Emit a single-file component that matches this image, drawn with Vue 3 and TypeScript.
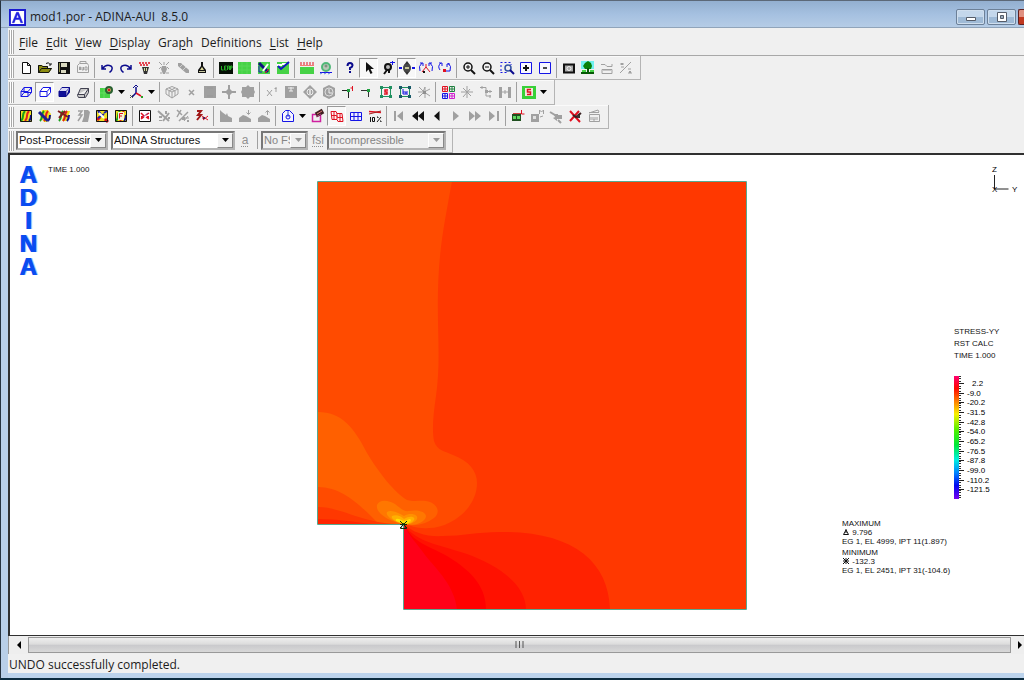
<script setup lang="ts">
import { ref } from 'vue'

interface Shape { d: string; fill: string; stroke: string; w: number }
interface Tool { icon: string; label: string; pressed?: boolean; off?: boolean; drop?: boolean }

const G = '#a0a0a0'
const N = '#0a0a8c'
const K = '#111111'
const R = '#e01020'
const B = '#1414e6'
const L = '#46d246'

const f = (d: string, fill: string): Shape => ({ d, fill, stroke: 'none', w: 0 })
const s = (d: string, stroke: string, w = 1, fill = 'none'): Shape => ({ d, fill, stroke, w })

const ring = (x: number, y: number, r: number) =>
  `M${x - r} ${y}a${r} ${r} 0 1 0 ${2 * r} 0a${r} ${r} 0 1 0 ${-2 * r} 0`

const cube = (c: string, front: string, hidden = false): Shape[] => [
  s('M3 7.5h7v5h-7zM3 7.5l3-4h7.5l-3.500 4M13.500 3.500v5l-3.500 4', c, 1, front),
  ...(hidden ? [s('M6 3.500v5l-3 4M6 8.500h7.500', c)] : [])
]
const band = (box: string): Shape[] => [
  f(box, '#f0e020'),
  s('M3 13Q5 11 5 8t2-5', '#18a018', 2),
  s('M7 13Q9 11 9 8t2-5', '#e02020', 2),
  s('M11 13q2-2 2-6', '#101090', 2)
]
const box = (c: string, inner: Shape[]): Shape[] => [s('M2.500 2.500h11v11h-11z', c, 1, '#fff'), ...inner]
const corners = (c: string): Shape[] => [
  s('M3.500 3.500h9v9h-9z', '#209060'),
  f('M2 2h3v3H2zM11 2h3v3h-3zM2 11h3v3H2zM11 11h3v3h-3z', c)
]
const lens = (c = K): Shape[] => [s(ring(7, 7, 4), c, 1.500), s('M10 10l4 4', c, 2)]

const icons: Record<string, Shape[]> = {
  new: [s('M4.500 2.500h5l3 3v8h-8zM9.500 2.500v3h3', K, 1, '#fff')],
  open: [f('M1 5h4l1 1h5v2h4l-3 5H1z', '#8c8c10'), s('M1.500 12.500v-7h3l1 1h5v2M1.500 12.500l3-4h10l-3 4zM9 3.500q3-2 4 1M14 3v2h-2', K)],
  save: [f('M2 2h12v12H2z', K), f('M5 3h6v4H5zM5 10h5v3H5z', '#d8d8c0'), f('M3 3h1v9H3z', '#90904c')],
  auto: [s('M2.500 5.500l2-2h8l1 2v7h-11zM5 3V1.500h6V4', G), s('M4.500 10V7h1v3M7 7v3h1.500V7M10 7h2v3h-2z', G)],
  undo: [s('M3 5v4h4M3.500 8.500q3-4 7-3t2 5l-2 2', N, 1.500)],
  redo: [s('M13 5v4H9M12.500 8.500q-3-4-7-3t-2 5l2 2', N, 1.500)],
  brush: [s('M2 3h2m1 0h2m1 0h2m1 0h2M3 5h2m1 0h2m1 0h2', R, 1.500), f('M5 7h7l-2 7H7z', '#333'), s('M7.500 8v3M9.500 8v3', '#d8d8a0')],
  brushoff: [s('M3 2l3 3M8 2v3M13 2l-3 3M3 9l2-2M13 9l-2-2M4 13h2m4 0h3', G), f('M6 6h4l1 3-2 5H7L5 9z', G)],
  pencil: [f('M3 3l3 0 8 7 0 3-3 0-8-7z', G), s('M5 7l3-3M8 10l3-3', '#d0d0d0')],
  bell: [f('M7 2h2v4l3 4v3H4v-3l3-4z', K), f('M8 7l2 3H6z', '#e0dca0'), f('M5 11h6v1H5z', '#c8c8a0')],
  clear: [f('M1 2h14v12H1z', '#061006'), s('M3.500 6v4h2M6.500 6v4h2M6.500 6h2M6.500 8h1.500M9.500 10V6h2v4M9.500 8h2M12.500 10V6H14v2h-1', '#28b028')],
  green: [f('M1 2h13v12H1z', L), s('M1 6h13M1 10h13M5 2v12M10 2v12', '#56d856')],
  greenpen: [f('M2 2h12v12H2z', L), s('M3 3l9 9', '#101080', 3), s('M12 4l-5 7', '#fff', 2), s('M9 13l4-4', R), s('M3 6v6h3', '#2020c0')],
  greencheck: [f('M2 2h12v12H2z', L), s('M2 5h5M7 4h5', '#fff', 2), s('M3 6l3 3 8-7', '#1018c0', 2)],
  loads: [f('M1 7h14v7H1z', L), s('M2 2v4M5 2v4M8 2v4M11 2v4M14 2v4', R), s('M1 5.500h14', '#f08070')],
  person: [s(ring(8, 7, 4), '#50b878', 2, '#b8c8b8'), s(ring(8, 6, 1), '#708070'), f('M2 12h12v1H2z', B), s('M2 14l2-1m2 1l2-1m2 1l2-1', '#6080e0')],
  help: [s('M5.500 6Q5.500 3 8 3t2.500 2.500Q10.500 7 8 8v2', N, 2), f('M7 11h2v2H7z', N)],
  arrow: [f('M5 2v10l2.500-2.500L9.500 14l2-1-2-4H13z', K)],
  snap: [s(ring(8, 7, 3), K, 2, '#bbb'), s('M7 10l-3 4M9 10v3', K, 2), s('M10 2.500h5M12.500 1v4', B)],
  pan: [f('M8 1l3 4H5zM8 15l-3-4h6z', '#333'), f(ring(8, 8, 4), '#484848'), f('M6 7h4v2H6z', '#c8c898'), f('M0 7h3v2H0zM13 7h3v2h-3z', B)],
  rotate: [s('M2 11Q0 6 4 3M14 11q2-5-2-8M2 3h3v3M14 3h-3v3', B), s('M4 12l4-5 4 5M8 7V4', R), f('M5 11h2v2H5z', K)],
  spin: [s('M3 10Q0 6 4 3M13 11q2-5-2-8M2 3h3v3M13 4h-3v3', B), f('M6 9h3v3H6z', R), s('M9 11h4', B)],
  zoomin: [...lens(), s('M5 7h4M7 5v4', K)],
  zoomout: [...lens(), s('M5 7h4', K)],
  zoombox: [s('M1.500 2.500h2m2 0h2m2 0h2M1.500 12.500h2m2 0h2M2 5v2m0 2v2M12 4v1', B), s(ring(9, 8, 3), '#3050a0', 1.500), s('M11 10l4 4', N, 2)],
  plus: [s('M2.500 2.500h11v11h-11z', B, 1, '#f8f8ff'), s('M5 8h6M8 5v6', K, 2)],
  minus: [s('M2.500 2.500h11v11h-11z', B, 1, '#f8f8ff'), s('M6 8h4', K, 1.500)],
  camera: [s('M3 4.500h10v8H3z', K, 2, '#a8a8a8'), s(ring(8, 8.5, 2), '#eee', 1)],
  tree: [f('M1 1h13v8H1z', '#70f0f0'), f('M5 3l3-2 3 2 1 3-1 3H5L3 6z', '#088008'), f('M7 8h2v5H7zM1 12h13v2H1z', '#065806'), f('M2 10h4v2H2zM10 10h4v2h-4z', L)],
  ruler: [s('M2 4.500h4l2 2h5V4', G), s('M3 9.500h10v4H3z', G), s('M5 9v2m2-2v2m2-2v2m2-2v2', G)],
  diag: [s('M2 13L13 2M2 4h4M3 7h3M10 9h3M10 13h4', G), f('M3 3h2v2H3zM11 11h2v2h-2z', G)],
  cubewire: cube(B, 'none', true),
  cube: cube(B, '#fff'),
  cubefull: [...cube(N, '#101098'), f('M6 4h7l-3 3H3z', '#d8d8f4')],
  slab: [s('M2.500 11.500l3-7h8v4l-3 5h-7zM2.500 10.500h7l4-6M9.500 10.500v3', '#404050', 1, '#c8c8c8')],
  grouped: [f('M1 4h10v10H1z', L), s(ring(10, 6, 3), '#286030', 2, '#c8a060'), s('M9 6h2', R, 2), s('M1 9h6M5 4v10', '#62dc62')],
  axes: [s('M7 9V3M7 9l-4 4', N, 1.500), s('M7 9l5 3', R, 1.500), s('M4 4l3-3 2 2', N), f('M12 12h2v2h-2z', '#28a028'), s('M1 11l3 3M4 11l-3 3', '#555')],
  cubeoff: [s('M8 2.500l6 2.500v5l-6 4-6-4V5zM2 5l6 3 6-3M8 8v6M5 4l6 3v5M11 4L5 7v5', G)],
  xoff: [s('M6 6l5 5M11 6l-5 5', G, 1.500)],
  sqoff: [f('M2 2h12v12H2z', G), s('M5 4h6M5 12h6', '#989898')],
  crossoff: [f('M7 1h2v4l2 2 4 0v2l-4 0-2 2v4H7v-4l-2-2H1V7h4l2-2z', G)],
  gearoff: [f('M8 1l2 2 4 0 0 3 1 2-1 2 0 3-4 0-2 2-2-2-4 0 0-3-1-2 1-2 0-3 4 0z', G)],
  xpoint: [s('M3 6l5 6M8 6l-5 6M12 3v5M10.500 4.500h2', G)],
  diskoff: [f('M2 2h12v12H2z', G), s('M5 4h6M6 7h4M8 3v4', '#eee')],
  diaoff: [f('M8 1l7 7-7 7-7-7z', G), s(ring(8, 8, 3), '#eee'), s('M8 6v4', '#eee', 1.500)],
  hexoff: [f('M8 1l6 3v8l-6 3-6-3V4z', G), s(ring(8, 8, 4), '#ddd'), s('M8 5v4h3', '#eee')],
  edge1: [s('M2 6.500h7M8.500 6v8', '#222'), s('M12.500 2v5m-2-3h2', R), f('M7 5h3v3H7z', '#20a040')],
  edge2: [s('M2 6.500h7M9.500 6v7', '#333', 1), f('M8 5h3v3H8z', '#20a040')],
  sel1: [...corners('#209060'), s('M10 6H7v2h2v2H6', R, 1.500)],
  sel2: [...corners('#185868'), s('M6 5v5h3V8H6M10 7v4', B)],
  burst: [s('M2 8h5l2-5v11M3 3l5 5 6-3M3 13l5-5 6 4', G), f('M7 7h3v3H7z', '#909090')],
  mesh: [s('M2.500 2.500h5v5h-5zM5 2v6M2 5h6', R), s('M9.500 2.500h5v5h-5zM12 2v6M9 5h6', '#208040'), s('M2.500 9.500h5v5h-5zM5 9v6M2 12h6', B), s('M9.500 9.500h5v5h-5zM12 9v6M9 12h6', '#d020d0')],
  star: [s('M8 2v12M2 8h12M4 4l8 8M11 5l-7 8', G)],
  branch: [s('M2 3.500h6v4l6 0M8 7v5h5M4 2v3M12 6v3M12 11v3', G), f('M7 6h3v3H7z', G)],
  gap: [f('M2 3h3v11H2zM11 3h3v11h-3z', G), s('M5 8h6M8 6v4', G)],
  stress: [f('M1 2h14v13H1z', '#38d038'), f('M4 4h8v8H4z', '#f4e4e0'), s('M10 5.500H6.500v2.500h3v2.500H6', R, 1.500)],
  band1: [...band('M2 3h12v11H2z'), s('M2.500 2.500h11v11h-11z', K)],
  band2: [...band('M5 2h6l3 4v4l-4 4H7L3 9z'), s('M2 4l9 9', '#202090', 3)],
  band3: [...band('M8 3h6l-3 10H6z'), s('M2 3l10 6M3 10l6-7', '#802020', 2)],
  bandoff: [f('M9 2h4l2 2-2 10H7l2-6z', G), s('M3 3h4L4 7h3l-4 6', G, 1.500)],
  band4: [f('M2 2h12v12H2z', '#f0e020'), s('M3 12l3-3M11 11l3 3', R, 3), s('M4 3l3 3M10 5l3-2M4 10l6-4', '#2020b0', 2), s('M5 5l5 5', '#fff', 2), s('M2.500 2.500h11v11h-11z', K)],
  band5: [...band('M2 2h12v12H2z'), s('M2.500 2.500h11v11h-11z', K), f('M5 4h6v8H5z', '#f4f4d8'), s('M10 5.500H6.500v5M6.500 8H9', R)],
  vec1: box(K, [s('M4 5l3 3m5-3l-3 2M4 11l3-2m5 2l-3-2', R, 1.500), s('M5 10l6-5', '#a04080'), f('M4 8h2v2H4zM10 8h2v2h-2z', R)]),
  vec2: [s('M2 3l11 10M7 13l6-8', G, 2), f('M3 8h3v2H3zM9 3h2v3H9zM12 9h2v2h-2zM3 12h3v1H3z', G)],
  vec3: [s('M2 2l5 5M6 2L2 9M4 13L13 4', G, 1.500), s('M9 10h5M9 13l4-5', G), f('M7 9h3v3H7zM12 12h2v2h-2z', G)],
  vec4: [s('M3 3h4L4 7h3l-4 5', '#a01818', 2), s('M8 8l6 4M9 12l5-4M8 10h3', R), f('M9 9h2v2H9z', '#502050')],
  mount1: [f('M2 2l2 2 4 3 1-2 1 3 4 2v4H2z', G)],
  mount2: [f('M2 10l4-3 3 1 5 3v3H2z', G), s('M11.500 2v4M9.500 4.500l2 2 2-2', G)],
  mount3: [f('M2 10l4-3 3 1 5 3v3H2z', G), s('M11.500 7V3M9.500 4.500l2-2 2 2', G)],
  probe: [s('M2.500 13.500v-8l3-3h4l4 4v7z', B, 1, '#f4f4ff'), s('M8 3v6', '#3050d0'), s(ring(8, 9, 2), B)],
  erase: [s('M2.500 6.500h8v7h-8z', '#d020a0', 1.500), s('M6 7l7-4', '#402020', 5), s('M7 6l5-3', '#e08080'), s('M6 9l5-3', '#b04080')],
  meshred: [s('M2 3.500l5 0 1 2 5 0 1 8-5 0-1-2-5 0zM2.500 7.500h5l1 2h5M5 4v8M11 6v7M8 5v6', R, 1, '#fff0f0')],
  meshblue: [s('M2.500 4.500h11v8h-11zM6 4v9M10 4v9M2 8.500h12', B, 1, '#eef')],
  percent: [s('M2 3.500l12 1', R, 1.500), s('M2 6l12-3', '#a02020'), s('M3.500 9v5M5.500 9.500h2v4h-2zM10 9h1v1M14 9l-4 5M13 13h1v1', K)],
  first: [f('M12 3v10L6 8zM3 3h2v10H3z', G)],
  rewind: [f('M8 3v10L2 8zM14 3v10L8 8z', K)],
  back: [f('M10.500 3v10L5 8z', K)],
  play: [f('M5 3v10l6-5z', G)],
  forward: [f('M2 3v10l6-5zM8 3v10l6-5z', G)],
  last: [f('M3 3v10l6-5zM11 3h2v10h-2z', G)],
  filmL: [f('M2 6h9v7H2z', '#205020'), f('M3 8h3v3H3zM7 8h3v3H7z', '#60d860'), s('M11.500 2v4h3', R, 1), f('M3 5h8v1H3z', '#d04040')],
  filmM: [f('M2 6h8v8H2z', G), f('M4 8h3v3H4z', '#e0e0e0'), s('M10.500 6V2l2 2 2-2v4M11 9l3-1', G)],
  reel: [s('M2 4l5 3 3 0M10 12l3 3', G, 2), f('M6 7h8v4H8zM5 10l4-2v5z', G)],
  cut: [s('M3 3l10 11M12 3L3 13', R, 2), s('M6 7l3 2 5-4', '#382020', 2), f('M10 7h3v3h-3z', '#403030')],
  clap: [s('M3.500 6.500h10v7h-10zM3 5l9-3 1 2', G), s('M5 9v3M7 9v3h2V9M11 9v3M3 4.500h10', G)],
}

const t = (spec: string): Tool[] =>
  spec.split(',').map((entry) => {
    const [icon, label, flags = ''] = entry.trim().split(':')
    return { icon, label, pressed: flags.includes('p'), off: flags.includes('x'), drop: flags.includes('v') }
  })

const bars: Tool[][][] = [
  [
    t('new:New,open:Open,save:Save,auto:Import:x'),
    t('undo:Undo,redo:Redo,brush:Refresh,brushoff:Stop refresh:x,pencil:Edit:x,bell:Cleanup'),
    t('clear:Clear,green:Mesh plot,greenpen:Modify mesh plot,greencheck:Check mesh'),
    t('loads:Load plot,person:Boundary plot'),
    t('help:Query,arrow:Pick:p,snap:Snap,pan:Pan:p,rotate:Dynamic rotate,spin:Rotate'),
    t('zoomin:Zoom in,zoomout:Zoom out,zoombox:Zoom window,plus:Enlarge,minus:Reduce'),
    t('camera:Snapshot,tree:Model tree,ruler:Ruler:x,diag:Measure:x')
  ],
  [
    t('cubewire:Wireframe,cube:Hidden lines:p,cubefull:Shaded,slab:Outline'),
    t('grouped:Color groups:v,axes:View axes:v'),
    t('cubeoff:Volumes:x,xoff:Points:x,sqoff:Surfaces:x,crossoff:Nodes:x,gearoff:Bodies:x'),
    t('xpoint:Point numbers:x,diskoff:Surface numbers:x,diaoff:Node numbers:x,hexoff:Body numbers:x,edge1:Edge labels,edge2:Edges,sel1:Node sets,sel2:Element sets,burst:Explode:x'),
    t('mesh:Quad view,star:Nodes off:x,branch:Links:x,gap:Contact:x'),
    t('stress:Stress:v')
  ],
  [
    t('band1:Create band,band2:Modify band,band3:Clear band,bandoff:Smooth:x,band4:Band options,band5:Band style'),
    t('vec1:Create vectors,vec2:Modify vectors:x,vec3:Clear vectors:x,vec4:Vector options'),
    t('mount1:Surface plot:x,mount2:Scale down:x,mount3:Scale up:x'),
    t('probe:Cutting plane:v,erase:Erase plane,meshred:Deformed mesh:p,meshblue:Original mesh,percent:Scale displacement'),
    t('first:First solution:x,rewind:Fast back,back:Previous,play:Next:x,forward:Fast forward:x,last:Last solution:x'),
    t('filmL:Load movie,filmM:Mode movie:x,reel:Animate:x,cut:Delete movie,clap:Save movie:x')
  ]
]

const menus: [string, string, string][] = [
  ['', 'F', 'ile'], ['', 'E', 'dit'], ['', 'V', 'iew'], ['', 'D', 'isplay'],
  ['Gra', 'p', 'h'], ['Def', 'i', 'nitions'], ['', 'L', 'ist'], ['', 'H', 'elp']
]

const mode = ref('Post-Processing')
const program = ref('ADINA Structures')
const fsi = ref('No FSI')
const flow = ref('Incompressible')

const legend = ['2.2', '-9.0', '-20.2', '-31.5', '-42.8', '-54.0', '-65.2', '-76.5', '-87.8', '-99.0', '-110.2', '-121.5']
const ticks = Array.from({ length: 51 }, (_, i) => 4 + Math.round(i * 2.42))
const labelY = (i: number) => 12 + Math.round(i * 9.68)

const contours: [string, string][] = [
  ['#ff4b00', 'M1 0H135C128 40 122 65 121 110C120 150 124 180 119 215C116 235 115 250 117 260C120 270 128 270 136 274C152 280 160 290 160 302C160 328 133 347 112 347C100 348 95 345 87 343H1Z'],
  ['#ff6000', 'M1 231C24 231 37 246 50 272C62 292 78 312 90 319C98 321 103 319 109 320C121 322 124 332 117 337C109 343 98 346 87 343H62C49 331 29 306 1 306Z'],
  ['#ff3800', 'M1 326C24 326 45 342 80 343H1Z'],
  ['#ff2500', 'M1 338C20 338 38 341 55 343H1Z'],
  ['#ff7700', 'M87 343C76 342 58 333 60 324C63 317 73 320 78 323C83 327 87 331 92 330C103 328 112 332 108 338C104 343 96 345 87 343Z'],
  ['#ff9000', 'M87 343C78 342 68 335 70 331C74 328 82 332 87 335C94 331 102 334 100 338C98 342 92 344 87 343Z'],
  ['#ffb000', 'M87 343C80 342 73 337 75 335C79 333 84 335 87 338C93 334 99 336 97 339C95 342 91 344 87 343Z'],
  ['#ffe000', 'M87 343L79 340Q78 337 82 338L87 340L93 338Q95 339 92 342Z'],
  ['#ff2200', 'M87 343C96 352 110 356 126 355C145 355 160 351 183 351C255 350 292 380 293 429H87Z'],
  ['#ff1100', 'M87 343C98 360 115 362 150 373C185 386 209 405 209 429H87Z'],
  ['#ff0000', 'M87 343C96 362 110 364 130 375C158 392 169 408 169 429H87Z'],
  ['#ff0018', 'M87 343C92 356 100 362 108 374C120 389 138 405 140 429H87Z']
]
</script>

<template>
  <div class="window">
    <header class="title">
      <svg class="app" viewBox="0 0 18 18"><path d="M1 1h16v16H1z" fill="#fff" stroke="#1a1ad0" stroke-width="2" /><path d="M3.500 14.500L8 3.500h2l4.500 11h-2l-1.300-3.500H6.800L5.500 14.500zM7.500 9.500h3L9 5.500z" fill="#2020e0" stroke="#2020e0" stroke-width=".6" fill-rule="evenodd" /></svg>
      <h1>mod1.por - ADINA-AUI&nbsp; 8.5.0</h1>
      <div class="controls">
        <button aria-label="Minimize"><svg viewBox="0 0 14 12"><path d="M2.500 6.500h9v3h-9z" fill="#fff" stroke="#555c68" /></svg></button>
        <button aria-label="Maximize"><svg viewBox="0 0 14 12"><path d="M2.500 1.500h9v9h-9z" fill="#fff" stroke="#555c68" /><path d="M5.500 4.500h3v3h-3z" fill="#9ab" stroke="#555c68" /></svg></button>
        <button class="close" aria-label="Close"></button>
      </div>
    </header>

    <nav class="menu">
      <span class="grip"></span>
      <button v-for="m in menus" :key="m.join('')">{{ m[0] }}<u>{{ m[1] }}</u>{{ m[2] }}</button>
    </nav>

    <div class="bars">
      <div v-for="(bar, b) in bars" :key="b" class="bar" role="toolbar">
        <span class="grip"></span>
        <div v-for="(group, g) in bar" :key="g" class="group">
          <template v-for="tool in group" :key="tool.icon">
            <button class="tool" :class="{ pressed: tool.pressed }" :aria-label="tool.label" :disabled="tool.off">
              <svg viewBox="0 0 16 16"><path v-for="(p, i) in icons[tool.icon]" :key="i" :d="p.d" :fill="p.fill" :stroke="p.stroke" :stroke-width="p.w" /></svg>
            </button>
            <button v-if="tool.drop" class="drop" :aria-label="tool.label + ' options'">
              <svg viewBox="0 0 7 4"><path d="M0 0h7L3.500 4z" /></svg>
            </button>
          </template>
        </div>
      </div>
      <div class="bar combos">
        <span class="grip"></span>
        <label class="combo mode">
          <select v-model="mode" aria-label="Program mode"><option>Post-Processing</option></select>
          <i><svg viewBox="0 0 7 4"><path d="M0 0h7L3.500 4z" /></svg></i>
        </label>
        <label class="combo program">
          <select v-model="program" aria-label="Program module"><option>ADINA Structures</option></select>
          <i><svg viewBox="0 0 7 4"><path d="M0 0h7L3.500 4z" /></svg></i>
        </label>
        <button class="word" disabled>a</button>
        <span class="rule"></span>
        <label class="combo fsi off">
          <select v-model="fsi" aria-label="FSI" disabled><option>No FSI</option></select>
          <i><svg viewBox="0 0 7 4"><path d="M0 0h7L3.500 4z" /></svg></i>
        </label>
        <button class="word" disabled>fsi</button>
        <label class="combo flow off">
          <select v-model="flow" aria-label="Flow type" disabled><option>Incompressible</option></select>
          <i><svg viewBox="0 0 7 4"><path d="M0 0h7L3.500 4z" /></svg></i>
        </label>
      </div>
    </div>

    <main class="canvas">
      <div class="left">
        <div class="logo"><span v-for="(c, i) in 'ADINA'" :key="i">{{ c }}</span></div>
        <p>TIME 1.000</p>
      </div>
      <svg class="plot" viewBox="0 0 430 430" role="img" aria-label="Stress contour plot">
        <path d="M1 0H429V429H87V343H1Z" fill="#ff3800" />
        <path v-for="(c, i) in contours" :key="i" :fill="c[0]" :d="c[1]" />
        <path d="M1 .5H429.500V428.500H86.500V343.500H.5V.5Z" fill="none" stroke="#58a890" />
        <path d="M83 340l7 7M90 340l-7 7M83 343.500h7M83.500 347.500h6l-3-5z" fill="none" stroke="#10300c" />
      </svg>
      <div class="right">
        <svg class="axis" viewBox="0 0 34 32">
          <path d="M4.500 11v14h14" fill="none" stroke="#222" />
          <text x="2" y="8">Z</text><text x="2" y="28">X</text><text x="22" y="28">Y</text>
        </svg>
        <div class="heading">STRESS-YY<br />RST CALC<br />TIME 1.000</div>
        <svg class="scale" viewBox="0 0 60 132">
          <defs>
            <linearGradient id="spectrum" x1="0" y1="0" x2="0" y2="1">
              <stop offset="0" stop-color="#ff0070" /><stop offset=".1" stop-color="#ff0800" />
              <stop offset=".2" stop-color="#ff7800" /><stop offset=".31" stop-color="#f8f000" />
              <stop offset=".44" stop-color="#50f000" /><stop offset=".56" stop-color="#00e838" />
              <stop offset=".68" stop-color="#00f0e0" /><stop offset=".79" stop-color="#0080ff" />
              <stop offset=".89" stop-color="#0008f0" /><stop offset="1" stop-color="#7800f0" />
            </linearGradient>
          </defs>
          <path d="M0 4h5v123H0z" fill="url(#spectrum)" />
          <path v-for="y in ticks" :key="y" :d="`M5 ${y + 0.5}h2`" stroke="#333" />
          <g v-for="(v, i) in legend" :key="v">
            <path :d="`M5 ${labelY(i) - 0.5}h5`" stroke="#222" />
            <text :x="i === 0 ? 18 : 13" :y="labelY(i) + 2">{{ v }}</text>
          </g>
        </svg>
        <div class="extremes">
          <p>MAXIMUM<br /><svg viewBox="0 0 8 8"><path d="M1.500 6.500h5L4 2zM4 1v4" fill="none" stroke="#111" /></svg> 9.796<br />EG 1, EL 4999, IPT 11(1.897)</p>
          <p>MINIMUM<br /><svg viewBox="0 0 8 8"><path d="M1 1l6 6M7 1L1 7M1 4h6M4 1v6" fill="none" stroke="#111" /></svg> -132.3<br />EG 1, EL 2451, IPT 31(-104.6)</p>
        </div>
      </div>
    </main>

    <div class="scroll">
      <button aria-label="Scroll left"><svg viewBox="0 0 4 8"><path d="M4 0v8L0 4z" /></svg></button>
      <button class="thumb" aria-label="Scroll position"><svg viewBox="0 0 9 8"><path d="M1 0v7M4.500 0v7M8 0v7" fill="none" stroke="#555" /></svg></button>
      <button class="next" aria-label="Scroll right"><svg viewBox="0 0 4 8"><path d="M0 0v8l4-4z" /></svg></button>
    </div>
    <footer>UNDO successfully completed.</footer>
  </div>
</template>

<style>
body { margin: 0; }
</style>

<style scoped>
* { box-sizing: border-box; }
button { border: 0; padding: 0; margin: 0; background: none; font: inherit; color: inherit; display: grid; place-items: center; }
svg { display: block; }
p, h1 { margin: 0; }

.window {
  min-height: 100vh;
  display: flex;
  flex-direction: column;
  overflow: hidden;
  border-top: 1px solid #5c6878;
  border-left: 1px solid #26323e;
  border-bottom: 2px solid #0c2c40;
  background: #f0f0f0;
  box-shadow: inset 7px 0 #b9cfe8, inset 0 -5px #bcd3ec;
  padding: 0 0 5px 7px;
  font-family: "Open Sans", "Noto Sans", sans-serif;
  font-size: 12px;
  color: #1c1c1c;
}
.title {
  height: 27px;
  display: flex;
  align-items: center;
  gap: 4px;
  margin-left: -7px;
  padding-left: 8px;
  padding-top: 6px;
  background: linear-gradient(#93afd0, #a5c0e0 50%, #b5cce6);
  border-bottom: 1px solid #90a4ba;
}
.app { width: 17px; height: 17px; }
h1 { font-size: 12px; font-weight: 400; line-height: 16px; }
.controls { margin-left: auto; display: flex; gap: 2px; }
.controls button {
  width: 29px;
  height: 16px;
  border: 1px solid #6c8098;
  border-radius: 2px;
  background: linear-gradient(#c4d7eb 50%, #9fbad6 50%);
  box-shadow: inset 0 0 0 1px #cfdeee;
}
.controls svg { width: 14px; height: 12px; }
.controls .close { width: 6px; border-right: 0; border-radius: 2px 0 0 2px; background: linear-gradient(#e09080 50%, #c03820 50%); border-color: #602020; box-shadow: none; }

.grip { width: 5px; align-self: stretch; margin: 2px 2px 1px 1px; border: 1px solid #a8a8a8; border-width: 0 1px; background: linear-gradient(90deg, #fff 1px, #a8a8a8 1px, #a8a8a8 2px, #fff 2px); flex: none; }
.menu { height: 28px; display: flex; align-items: center; border-bottom: 1px solid #a8a8a8; }
.menu .grip { margin-right: 1px; }
.menu button { padding: 2px 4px 0; display: block; line-height: 18px; }
.menu u { text-underline-offset: 2px; }

.bars { height: 97px; display: grid; grid-template-rows: repeat(4, 1fr); justify-items: start; }
.bar { display: flex; align-items: center; padding-right: 5px; border: 1px solid #b4b4b4; border-width: 0 1px 1px 0; box-shadow: inset 0 1px #fafafa; }
.group { display: flex; align-items: center; }
.group + .group { margin-left: 2px; padding-left: 2px; border-left: 1px solid #a0a0a0; }
.tool { width: 19px; height: 20px; }
.tool svg { width: 16px; height: 16px; }
.pressed { border: 1px solid #999; border-color: #999 #fff #fff #999; background: #f8f8f8; }
.drop { width: 11px; height: 20px; }
.drop svg, .combo svg { width: 7px; height: 4px; }

.combos { font-family: "Liberation Sans", Arial, sans-serif; font-size: 11px; padding-right: 5px; }
.combo { display: grid; height: 19px; border: 2px solid #858585; border-color: #777 #b4b4b4 #b4b4b4 #777; background: #fff; margin-right: 1px; }
.combo select, .combo i { grid-area: 1 / 1; }
.combo select { appearance: none; width: 100%; min-width: 0; border: 0; border-radius: 0; outline: 0; background: none; padding: 0 16px 0 1px; font: inherit; color: #111; opacity: 1; overflow: hidden; }
.combo i { justify-self: end; width: 16px; display: grid; place-items: center; pointer-events: none; background: #f0f0f0; border: 1px solid #888; border-color: #fff #888 #888 #fff; }
.mode { width: 92px; margin-right: 3px; }
.program { width: 124px; }
.fsi { width: 47px; margin-left: 3px; }
.flow { width: 119px; }
.off { background: #f0f0f0; }
.off select { color: #858585; }
.off path { fill: #999; }
.word { width: 18px; color: #909090; font-size: 12px; text-decoration: underline dotted; text-underline-offset: 2px; }
.rule { width: 1px; height: 18px; background: #a0a0a0; margin-left: 3px; }

.canvas {
  flex: 1;
  min-height: 482px;
  display: grid;
  grid-template-columns: 307px minmax(430px, 1fr) 182px;
  border: 2px solid #303030;
  border-width: 2px 0 1px 2px;
  background: #fff;
  font-family: "Liberation Sans", Arial, sans-serif;
  font-size: 8px;
  color: #111;
}
.left { display: flex; align-items: flex-start; gap: 10px; padding: 8px 0 0 8px; }
.left p { line-height: 14px; }
.logo { width: 20px; display: grid; justify-items: center; font-weight: 700; font-size: 24px; line-height: 23px; color: #0a4cf0; text-shadow: 1px 0 #0a4cf0, 2px 0 #a8c4ff; }
.plot { width: 430px; height: 430px; margin-top: 26px; }
.right { display: flex; flex-direction: column; align-items: flex-start; }
.axis { width: 34px; height: 32px; margin: 9px 0 0 148px; }
.heading { margin: 130px 0 0 112px; line-height: 12px; white-space: nowrap; }
.scale { width: 60px; height: 132px; margin: 10px 0 0 112px; }
.extremes { display: grid; gap: 2px; margin-top: 15px; line-height: 9px; white-space: nowrap; }
.extremes svg { display: inline-block; width: 8px; height: 8px; vertical-align: -1px; }

.scroll { height: 18px; display: grid; grid-template-columns: 19px 1fr 13px; border-left: 1px solid #999; background: #eee; }
.scroll svg { width: 4px; height: 8px; }
.scroll .thumb { margin: 1px 0; border: 1px solid #999; background: linear-gradient(#eee, #dcdcdc 45%, #c9c9cc 50%, #d8d8d8); }
.scroll .thumb svg { width: 9px; }
.next { padding-left: 5px; }
footer { height: 19px; line-height: 22px; padding-left: 1px; }
</style>
